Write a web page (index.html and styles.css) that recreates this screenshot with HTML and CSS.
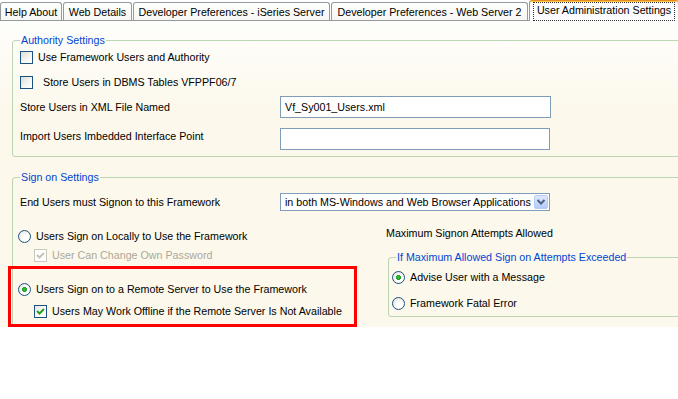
FILE: index.html
```html
<!DOCTYPE html>
<html>
<head>
<meta charset="utf-8">
<link rel="stylesheet" href="styles.css">
</head>
<body>
<div class="tabs">
  <div class="tab w1">Help About</div>
  <div class="tab w2">Web Details</div>
  <div class="tab w3">Developer Preferences - iSeries Server</div>
  <div class="tab w4">Developer Preferences - Web Server 2</div>
  <div class="tab active w5"><span class="focus">User Administration Settings</span></div>
</div>
<div class="page">
  <fieldset class="group auth">
    <legend>Authority Settings</legend>
    <div class="row r1"><span class="cb"></span><span class="gap5">Use Framework Users and Authority</span></div>
    <div class="row r2"><span class="cb"></span><span class="gap10">Store Users in DBMS Tables VFPPF06/7</span></div>
    <div class="row r3"><span class="lbl">Store Users in XML File Named</span><div class="input w271">Vf_Sy001_Users.xml</div></div>
    <div class="row r4"><span class="lbl up">Import Users Imbedded Interface Point</span><div class="input w270"></div></div>
  </fieldset>
  <fieldset class="group signon">
    <legend>Sign on Settings</legend>
    <div class="row ra"><span class="lbl">End Users must Signon to this Framework</span>
      <div class="select"><span>in both MS-Windows and Web Browser Applications</span>
        <span class="arrow"><svg width="12" height="12" viewBox="0 0 12 12"><polyline points="2.5,4 6,7.5 9.5,4" fill="none" stroke="#4d6185" stroke-width="2"/></svg></span>
      </div>
    </div>
    <div class="cols">
      <div class="left">
        <div class="row rr1"><span class="rb"></span><span class="gap5">Users Sign on Locally to Use the Framework</span></div>
        <div class="row rr2"><span class="cb dis"><svg width="11" height="11" viewBox="0 0 11 11"><polyline points="2,5 4.5,7.5 9,3" fill="none" stroke="#c6c4b6" stroke-width="2"/></svg></span><span class="gap5 disabled">User Can Change Own Password</span></div>
        <div class="redbox">
          <div class="row"><span class="rb on"></span><span class="gap5">Users Sign on to a Remote Server to Use the Framework</span></div>
          <div class="row rr4"><span class="cb chk"><svg width="11" height="11" viewBox="0 0 11 11"><polyline points="2,5 4.5,7.5 9,3" fill="none" stroke="#21a121" stroke-width="2"/></svg></span><span class="gap5">Users May Work Offline if the Remote Server Is Not Available</span></div>
        </div>
      </div>
      <div class="right">
        <div class="maxlbl">Maximum Signon Attempts Allowed</div>
        <fieldset class="group inner">
          <legend>If Maximum Allowed Sign on Attempts Exceeded</legend>
          <div class="row i1"><span class="rb on"></span><span class="gap5">Advise User with a Message</span></div>
          <div class="row i2"><span class="rb"></span><span class="gap5">Framework Fatal Error</span></div>
        </fieldset>
      </div>
    </div>
  </fieldset>
</div>
</body>
</html>
```
FILE: styles.css
```css
* { box-sizing: border-box; }
html, body { margin: 0; }
body {
  width: 678px;
  height: 399px;
  overflow: hidden;
  background: #fff;
  color: #000;
  font: 10.7px/13px "Liberation Sans", Arial, sans-serif;
}
.tabs {
  display: flex;
  align-items: flex-end;
  height: 21px;
  border-bottom: 1px solid #919b9c;
}
.tab {
  height: 18px;
  border: 1px solid #919b9c;
  border-bottom: none;
  border-radius: 3px 3px 0 0;
  background: linear-gradient(#ffffff, #f7f6f1);
  display: flex;
  align-items: center;
  justify-content: center;
  white-space: nowrap;
  padding-top: 1px;
  flex: none;
}
.w1 { width: 62px; }
.w2 { width: 69px; margin-left: 1px; }
.w3 { width: 197px; margin-left: 1px; }
.w4 { width: 197px; margin-left: 1px; }
.w5 { width: 150px; margin-left: 1px; }
.tab.active {
  height: 21px;
  margin-bottom: -1px;
  background: #fcfcfe;
  border-top: 1px solid #e68b2c;
  box-shadow: inset 0 1px 0 #ffc83c;
  padding: 1px 3px 0;
  align-items: stretch;
}
.focus {
  flex: 1;
  border: 1px dotted #333;
  display: flex;
  align-items: center;
  justify-content: center;
  padding-bottom: 2px;
}
.page {
  height: 306px;
  overflow: hidden;
  background: linear-gradient(#fefefc, #fcf8ec 90px);
  padding: 12px 0 0 12px;
}
.group {
  border: 1px solid #bcd6b4;
  border-radius: 3px;
  margin: 0 -14px 0 0;
  padding: 0 0 0 7px;
  min-width: 0;
}
legend {
  color: #0046d5;
  line-height: 14px;
  padding: 0 1px;
  margin-left: 0;
}
.row { display: flex; align-items: center; white-space: nowrap; }
.auth { padding-bottom: 6px; }
.r1 { margin-top: 4px; height: 13px; }
.r2 { margin-top: 12px; height: 13px; }
.r3 { margin-top: 7px; height: 22px; }
.r4 { margin-top: 10px; height: 22px; }
.lbl { width: 260px; flex: none; }
.up { margin-bottom: 5px; }
.gap5 { margin-left: 5px; }
.gap10 { margin-left: 10px; }
.input {
  height: 22px;
  border: 1px solid #7f9db9;
  background: #fff;
  padding-left: 4px;
  display: flex;
  align-items: center;
}
.w271 { width: 271px; }
.w270 { width: 270px; }
.cb {
  width: 13px;
  height: 13px;
  flex: none;
  border: 1px solid #1c5180;
  background: linear-gradient(135deg, #dcdcd7, #f4f4f0 55%, #ffffff);
  display: flex;
  align-items: center;
  justify-content: center;
}
.cb.dis { border-color: #cac8bb; background: #fff; }
.cb.chk { background: linear-gradient(135deg, #e6e6e0, #fbfbf8 55%, #ffffff); }
.disabled { color: #aca899; }
.rb {
  width: 13px;
  height: 13px;
  flex: none;
  border-radius: 50%;
  border: 1px solid #1c5180;
  background: radial-gradient(circle at 65% 65%, #ffffff 30%, #dcdcd7 100%);
}
.rb.on {
  background:
    radial-gradient(circle, #3bc33b 0, #21a121 2.2px, transparent 2.8px),
    radial-gradient(circle at 65% 65%, #ffffff 30%, #dcdcd7 100%);
}
.signon { margin-top: 13px; }
.ra { margin-top: 9px; height: 18px; }
.select {
  width: 270px;
  height: 18px;
  border: 1px solid #7f9db9;
  background: #fff;
  display: flex;
  align-items: center;
  padding-left: 4px;
}
.arrow {
  margin-left: auto;
  margin-right: 1px;
  width: 14px;
  height: 14px;
  border: 1px solid #b9cbf3;
  border-radius: 2px;
  background: linear-gradient(#dfe9fe, #b4c9f7);
  display: flex;
  align-items: center;
  justify-content: center;
}
.cols { display: flex; }
.left { width: 346px; flex: none; }
.rr1 { margin-top: 19px; height: 13px; margin-left: -2px; }
.rr2 { margin-top: 6px; height: 13px; margin-left: 14px; }
.redbox {
  margin-top: 4px;
  margin-left: -12px;
  width: 349px;
  border: 3px solid #ff0000;
  padding: 14px 0 6px 7px;
}
.redbox .row { height: 13px; }
.rr4 { margin-top: 9px; margin-left: 16px; }
.right { flex: 1; margin-left: 20px; }
.maxlbl { margin-top: 15px; line-height: 14px; white-space: nowrap; }
.inner {
  margin: 10px -40px 0 2px;
  padding: 0 0 6px 3px;
}
.inner legend { margin-left: 4px; }
.i1 { margin-top: 7px; height: 13px; }
.i2 { margin-top: 13px; height: 13px; }
```
